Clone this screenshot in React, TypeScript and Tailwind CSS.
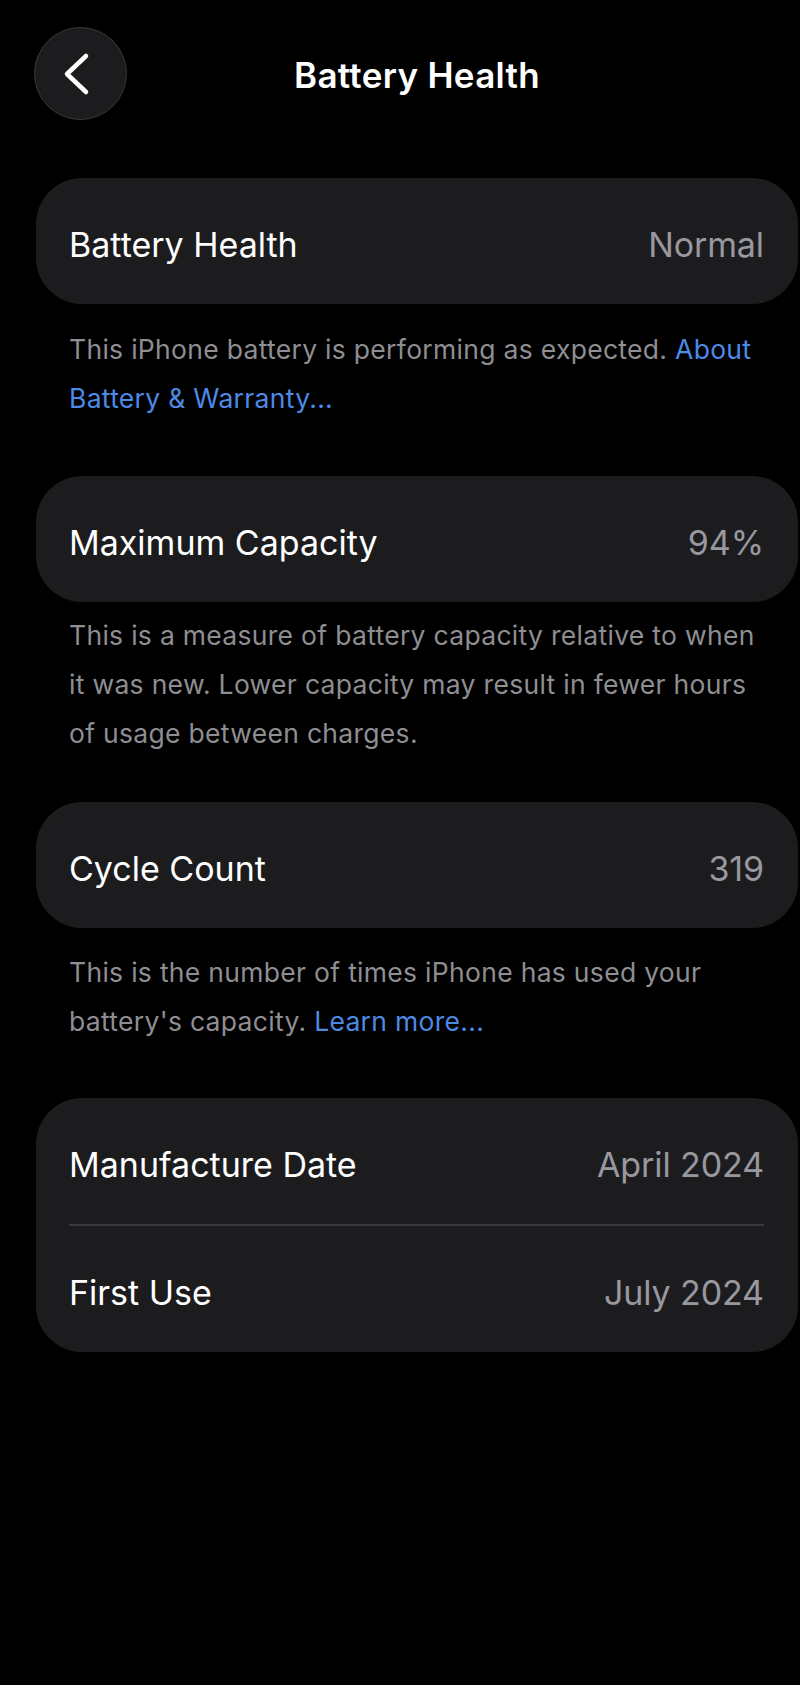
import React from "react";

const font = { fontFamily: "Inter, 'Noto Sans', sans-serif" };

function Row({ label, value }: { label: string; value: string }) {
  return (
    <div className="flex h-[126px] items-center justify-between pl-[33px] pr-[34px] pt-[7px]">
      <span className="text-[34px] leading-none text-white tracking-[0px]">{label}</span>
      <span className="text-[34px] leading-none text-[#98989e] tracking-[-0.1px]">{value}</span>
    </div>
  );
}

export default function App() {
  return (
    <div className="min-h-[1685px] w-[800px] bg-black" style={font}>
      <div className="pl-[34px] pr-[2px]">
        {/* Header */}
        <div className="relative flex h-[178px] items-start pt-[27px]">
          <button className="flex h-[93px] w-[93px] items-center justify-center rounded-full border border-[#38383b] bg-[#1c1c1e]">
            <svg width="30" height="44" viewBox="0 0 30 44" fill="none" className="-ml-[8px]">
              <path d="M24 4 L5 22 L24 40" stroke="white" strokeWidth="4.5" strokeLinecap="round" strokeLinejoin="round" />
            </svg>
          </button>
          <div className="absolute left-0 right-0 top-[53px] flex justify-center pl-[2px]">
            <span className="text-[35px] font-semibold leading-[44px] text-white tracking-[0.3px]">Battery Health</span>
          </div>
        </div>

        {/* Card 1 */}
        <div className="ml-[2px] rounded-[46px] bg-[#1c1c1e]">
          <Row label="Battery Health" value="Normal" />
        </div>
        <p className="mt-[21px] pl-[35px] pr-[34px] text-[26.5px] leading-[49px] text-[#8e8e93] tracking-[0.3px]">
          This iPhone battery is performing as expected.{" "}
          <span className="text-[#4d8ae6]">About Battery &amp; Warranty...</span>
        </p>

        {/* Card 2 */}
        <div className="ml-[2px] mt-[53px] rounded-[46px] bg-[#1c1c1e]">
          <Row label="Maximum Capacity" value="94%" />
        </div>
        <p className="mt-[9px] pl-[35px] pr-[34px] text-[26.5px] leading-[49px] text-[#8e8e93] tracking-[0.3px]">
          This is a measure of battery capacity relative to when it was new. Lower capacity may result in fewer hours of usage between charges.
        </p>

        {/* Card 3 */}
        <div className="ml-[2px] mt-[44px] rounded-[46px] bg-[#1c1c1e]">
          <Row label="Cycle Count" value="319" />
        </div>
        <p className="mt-[20px] pl-[35px] pr-[34px] text-[26.5px] leading-[49px] text-[#8e8e93] tracking-[0.3px]">
          This is the number of times iPhone has used your battery's capacity.{" "}
          <span className="text-[#4d8ae6]">Learn more...</span>
        </p>

        {/* Card 4 */}
        <div className="ml-[2px] mt-[52px] rounded-[46px] bg-[#1c1c1e]">
          <Row label="Manufacture Date" value="April 2024" />
          <div className="ml-[33px] mr-[34px] h-[2px] bg-[#3a3a3d]" />
          <Row label="First Use" value="July 2024" />
        </div>
      </div>
    </div>
  );
}
